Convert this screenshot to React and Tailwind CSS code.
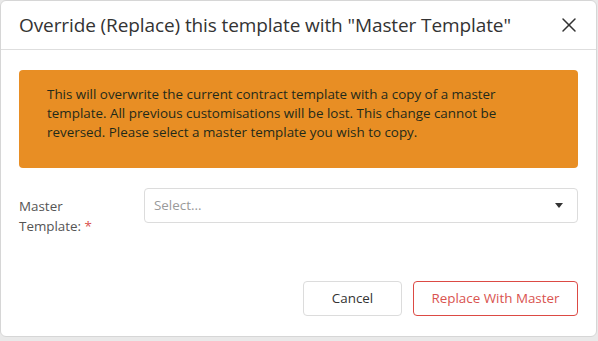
import React from "react";
import { X } from "lucide-react";

function App() {
  return (
    <div
      className="w-[598px] h-[341px] bg-[#e9e9e9] overflow-hidden"
      style={{ fontFamily: '"Open Sans", "Noto Sans", sans-serif' }}
    >
      <div className="w-[597px] h-[337px] bg-white rounded-md border border-[#d6d6d6] flex flex-col">
        {/* header */}
        <div className="h-[49px] flex items-center justify-between pl-[18px] pr-[15px] border-b border-[#dedede]">
          <h2 className="text-[19px] text-[#333] tracking-[-0.1px] pt-[1px]">
            Override (Replace) this template with "Master Template"
          </h2>
          <button className="text-[#333]">
            <X size={24} strokeWidth={1.5} />
          </button>
        </div>

        {/* body */}
        <div className="px-[18px] pt-[20px] flex flex-col">
          <div className="bg-[#e88e24] rounded-[4px] h-[98px] pl-[28px] pr-[50px] pt-[15px] text-[13.4px] leading-[19px] text-[#1f2a1a]">
            This will overwrite the current contract template with a copy of a master
            template. All previous customisations will be lost. This change cannot be
            reversed. Please select a master template you wish to copy.
          </div>

          <div className="flex mt-[20px]">
            <label className="w-[125px] text-[13.4px] leading-[20px] text-[#555] pt-[8px]">
              Master
              <br />
              Template: <span className="text-[#d9534f]">*</span>
            </label>
            <div className="flex-1 h-[35px] border border-[#dcdcdc] rounded-[4px] flex items-center justify-between pl-[9px] pr-[14px]">
              <span className="text-[13.4px] text-[#9a9a9a]">Select...</span>
              <span className="w-0 h-0 border-l-[4px] border-r-[4px] border-t-[5px] border-l-transparent border-r-transparent border-t-[#333]" />
            </div>
          </div>
        </div>

        {/* footer */}
        <div className="flex justify-end gap-[11px] px-[18px] mt-auto mb-[20px]">
          <button className="w-[99px] h-[35px] border border-[#dcdcdc] rounded-[4px] text-[13.4px] text-[#333] bg-white">
            Cancel
          </button>
          <button className="w-[165px] h-[35px] border border-[#dc4a44] rounded-[4px] text-[13.4px] text-[#d9534f] bg-white">
            Replace With Master
          </button>
        </div>
      </div>
    </div>
  );
}

export default App;
